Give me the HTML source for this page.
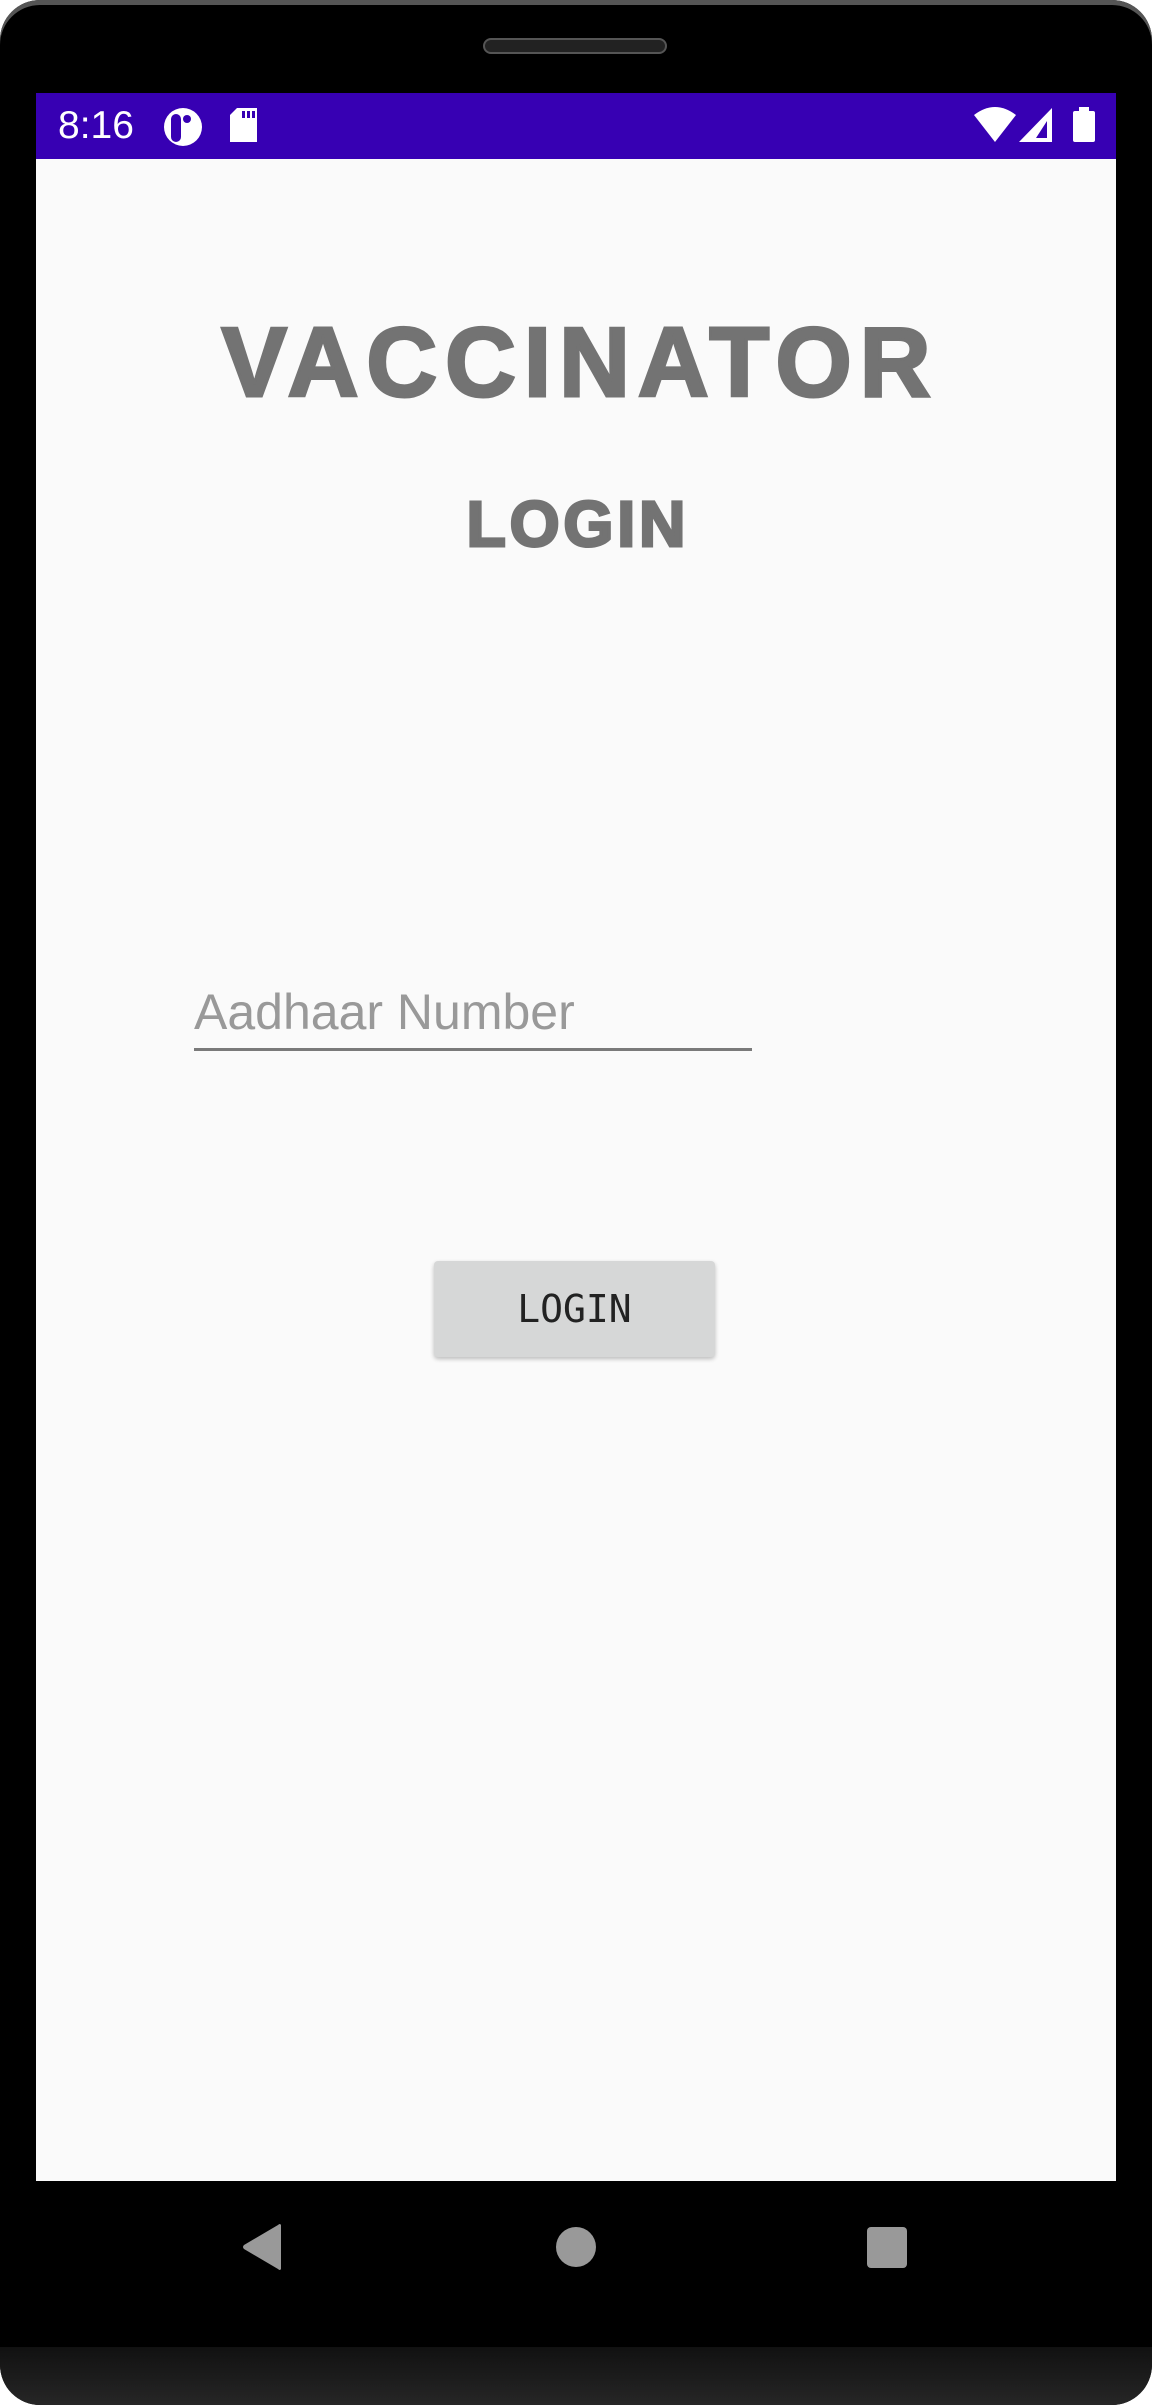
<!DOCTYPE html>
<html><head><meta charset="utf-8">
<style>
html,body{margin:0;padding:0;background:#fff;}
body{width:1152px;height:2405px;position:relative;overflow:hidden;font-family:"Liberation Sans",sans-serif;}
.phone{position:absolute;left:0;top:0;width:1152px;height:2405px;background:#000;border-radius:40px;box-shadow:inset 0 5px 0 #555;overflow:hidden;}
.chin{position:absolute;left:0;top:2347px;width:1152px;height:58px;background:linear-gradient(#111,#262626);border-radius:0 0 40px 40px;}
.speaker{position:absolute;left:483px;top:38px;width:184px;height:16px;border-radius:8px;background:#222;border:2px solid #555;box-sizing:border-box;}
.screen{position:absolute;left:36px;top:93px;width:1080px;height:2088px;background:#fafafa;}
.status{position:absolute;left:0;top:0;width:1080px;height:66px;background:#3700b3;}
.time{position:absolute;left:22px;top:11px;color:#fff;font-size:39px;}
.title{position:absolute;left:0;width:1080px;text-align:center;color:#737373;font-weight:bold;-webkit-text-stroke:3px #737373;}
</style></head><body>
<div class="phone">
<div class="speaker"></div>
<div class="screen">
 <div class="status">
  <div class="time">8:16</div>
  <svg style="position:absolute;left:0;top:0" width="1080" height="66">
   <circle cx="147" cy="34" r="19" fill="#fff"/>
   <rect x="135" y="21" width="10" height="28" rx="5" fill="#3700b3"/>
   <circle cx="151" cy="26" r="4" fill="#3700b3"/>
   <path d="M201 15 H221 V49 H194 V22 Z" fill="#fff"/>
   <rect x="206" y="18" width="3" height="7" fill="#3700b3"/>
   <rect x="211" y="18" width="3" height="7" fill="#3700b3"/>
   <rect x="216" y="18" width="3" height="7" fill="#3700b3"/>
   <path d="M938 22 Q959 6 980 22 L959 49 Z" fill="#fff"/>
   <path d="M1016 15 V49 H983 Z" fill="#fff"/>
   <path d="M1011 28 V45 H1000 Z" fill="#3700b3"/>
   <rect x="1037" y="18" width="22" height="31" rx="2" fill="#fff"/>
   <rect x="1043" y="14" width="10" height="5" fill="#fff"/>
  </svg>
 </div>
 <div class="title" style="top:220px;font-size:98px;line-height:98px;letter-spacing:8px;padding-left:8px;box-sizing:border-box;">VACCINATOR</div>
 <div class="title" style="top:399px;font-size:64px;line-height:64px;letter-spacing:4px;padding-left:4px;box-sizing:border-box;">LOGIN</div>
 <div style="position:absolute;left:158px;top:889px;font-size:50px;color:#999;line-height:60px;">Aadhaar Number</div>
 <div style="position:absolute;left:158px;top:955px;width:558px;height:3px;background:#7a7a7a;"></div>
 <div style="position:absolute;left:398px;top:1168px;width:281px;height:96px;background:#d6d7d7;border-radius:4px;box-shadow:0 2px 4px rgba(0,0,0,0.25);text-align:center;font-family:'DejaVu Sans Mono',monospace;font-size:38px;line-height:96px;color:#222;">LOGIN</div>
</div>
<svg style="position:absolute;left:0;top:2200px" width="1152" height="100">
 <path d="M281 25 V69 Q280 71 278 69 L244 49 Q242 47 244 45 L278 25 Q280 23 281 25 Z" fill="#999"/>
 <circle cx="576" cy="47" r="20" fill="#999"/>
 <rect x="867" y="27" width="40" height="41" rx="4" fill="#999"/>
</svg>
<div class="chin"></div>
</div>
</body></html>
